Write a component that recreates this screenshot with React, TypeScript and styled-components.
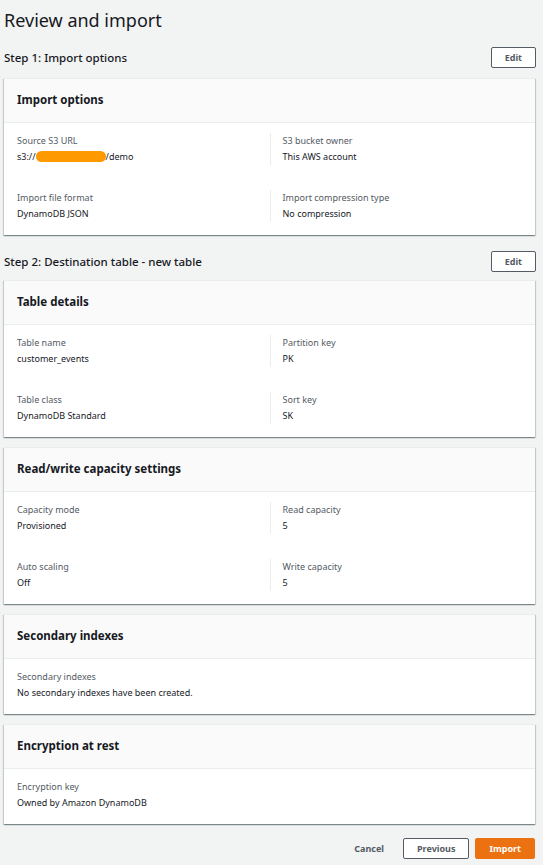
import React from 'react'
import styled, { createGlobalStyle } from 'styled-components'

const GlobalStyle = createGlobalStyle`
  html, body {
    margin: 0;
    padding: 0;
    background-color: #f2f3f3;
  }
  body {
    font-family: 'Noto Sans', 'Open Sans', Arial, sans-serif;
    color: #16191f;
  }
`

const Page = styled.div`
  display: flex;
  flex-direction: column;
  padding: 6px 7px 6px 3px;
`

const Title = styled.h1`
  margin: 0 0 0 1px;
  font-size: 18px;
  line-height: 28px;
  font-weight: 400;
  color: #16191f;
`

const StepHeader = styled.div<{ first?: boolean }>`
  display: flex;
  align-items: center;
  justify-content: space-between;
  height: 21px;
  margin: ${(p) => (p.first ? '13px 0 10px' : '6px 0 8px')};
`

const StepTitle = styled.h2`
  margin: 0 0 0 1px;
  font-size: 11.5px;
  font-weight: 500;
  color: #16191f;
`

const Button = styled.button<{ primary?: boolean }>`
  height: 21px;
  padding: 0 13px;
  border-radius: 2px;
  font-family: inherit;
  font-size: 9px;
  font-weight: 700;
  cursor: pointer;
  border: 1px solid ${(p) => (p.primary ? '#ec7211' : '#545b64')};
  background-color: ${(p) => (p.primary ? '#ec7211' : '#fff')};
  color: ${(p) => (p.primary ? '#fff' : '#545b64')};
`

const LinkButton = styled.button`
  height: 21px;
  padding: 0 13px;
  border: none;
  background: transparent;
  font-family: inherit;
  font-size: 9px;
  font-weight: 700;
  color: #545b64;
`

const Card = styled.section`
  background-color: #fff;
  border-top: 1px solid #eaeded;
  box-shadow: 0 1px 1px 0 rgba(0, 28, 36, 0.3), 1px 1px 1px 0 rgba(0, 28, 36, 0.15),
    -1px 1px 1px 0 rgba(0, 28, 36, 0.15);
  margin: 0 1px 10px 1px;
`

const CardHeader = styled.div`
  background-color: #fafafa;
  border-bottom: 1px solid #eaeded;
  padding: 13px 13px 14px;
  font-size: 11.5px;
  line-height: 16px;
  font-weight: 700;
`

const CardBody = styled.div<{ single?: boolean }>`
  display: grid;
  grid-template-columns: ${(p) => (p.single ? '1fr' : '1fr 1fr')};
  row-gap: 25px;
  padding: 10px 13px 13px;
`

const Item = styled.div<{ right?: boolean }>`
  display: flex;
  flex-direction: column;
  ${(p) => (p.right ? 'border-left: 1px solid #eaeded; padding-left: 12px;' : '')}
`

const Label = styled.div`
  font-size: 9px;
  line-height: 16px;
  color: #545b64;
`

const Value = styled.div`
  font-size: 9px;
  line-height: 16px;
  color: #16191f;
`

const Redacted = styled.span`
  display: inline-block;
  width: 70px;
  height: 11px;
  border-radius: 6px;
  background-color: #ff9900;
  vertical-align: middle;
  margin-top: -2px;
`

const Footer = styled.div`
  display: flex;
  justify-content: flex-end;
  gap: 6px;
  margin-top: 4px;
  padding-right: 1px;
`

type Field = { label: string; value: React.ReactNode }

const Details = ({ title, fields, single }: { title: string; fields: Field[]; single?: boolean }) => (
  <Card>
    <CardHeader>{title}</CardHeader>
    <CardBody single={single}>
      {fields.map((f, i) => (
        <Item key={f.label} right={!single && i % 2 === 1}>
          <Label>{f.label}</Label>
          <Value>{f.value}</Value>
        </Item>
      ))}
    </CardBody>
  </Card>
)

const App = () => {
  return (
    <Page>
      <GlobalStyle />
      <Title>Review and import</Title>

      <StepHeader first>
        <StepTitle>Step 1: Import options</StepTitle>
        <Button>Edit</Button>
      </StepHeader>
      <Details
        title="Import options"
        fields={[
          {
            label: 'Source S3 URL',
            value: (
              <>
                s3://
                <Redacted />
                /demo
              </>
            ),
          },
          { label: 'S3 bucket owner', value: 'This AWS account' },
          { label: 'Import file format', value: 'DynamoDB JSON' },
          { label: 'Import compression type', value: 'No compression' },
        ]}
      />

      <StepHeader>
        <StepTitle>Step 2: Destination table - new table</StepTitle>
        <Button>Edit</Button>
      </StepHeader>
      <Details
        title="Table details"
        fields={[
          { label: 'Table name', value: 'customer_events' },
          { label: 'Partition key', value: 'PK' },
          { label: 'Table class', value: 'DynamoDB Standard' },
          { label: 'Sort key', value: 'SK' },
        ]}
      />
      <Details
        title="Read/write capacity settings"
        fields={[
          { label: 'Capacity mode', value: 'Provisioned' },
          { label: 'Read capacity', value: '5' },
          { label: 'Auto scaling', value: 'Off' },
          { label: 'Write capacity', value: '5' },
        ]}
      />
      <Details
        single
        title="Secondary indexes"
        fields={[{ label: 'Secondary indexes', value: 'No secondary indexes have been created.' }]}
      />
      <Details
        single
        title="Encryption at rest"
        fields={[{ label: 'Encryption key', value: 'Owned by Amazon DynamoDB' }]}
      />

      <Footer>
        <LinkButton>Cancel</LinkButton>
        <Button>Previous</Button>
        <Button primary>Import</Button>
      </Footer>
    </Page>
  )
}

export default App
